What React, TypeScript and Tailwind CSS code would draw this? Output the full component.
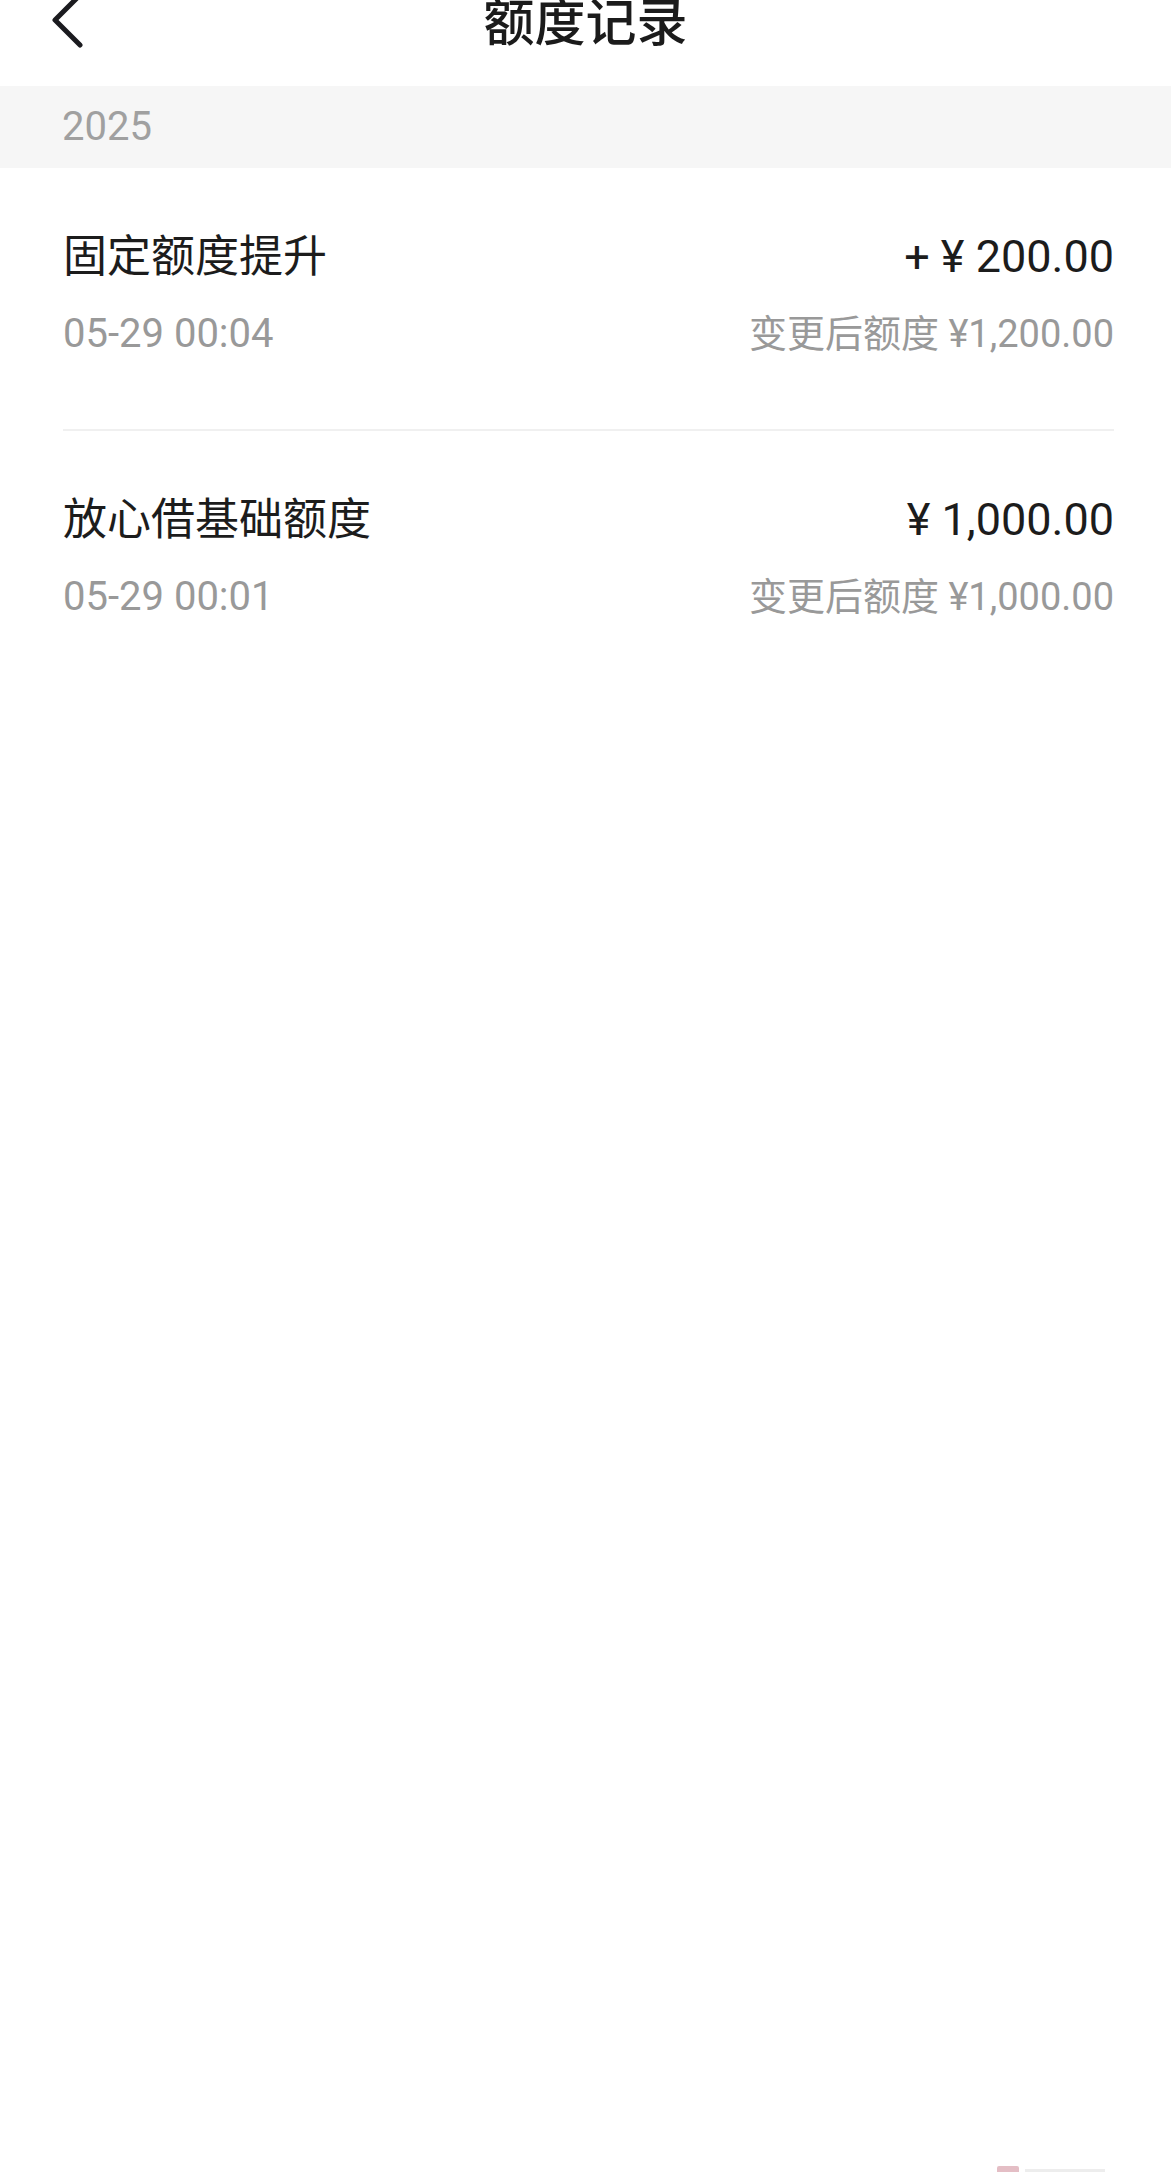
import React from "react";

const FONT = { fontFamily: "Roboto, 'Noto Sans CJK SC', sans-serif" };

type Rec = { title: string; amount: string; date: string; after: string };

const records: Rec[] = [
  { title: "固定额度提升", amount: "+ ¥ 200.00", date: "05-29 00:04", after: "变更后额度 ¥1,200.00" },
  { title: "放心借基础额度", amount: "¥ 1,000.00", date: "05-29 00:01", after: "变更后额度 ¥1,000.00" },
];

export default function App() {
  return (
    <div className="relative min-h-[2172px] w-full overflow-hidden bg-white" style={FONT}>
      {/* Header */}
      <div className="grid h-[86px] grid-cols-[1fr_auto_1fr] items-start">
        <div className="pl-[45px]">
          <svg width="44" height="64" viewBox="0 0 44 64" className="-mt-[10px]" fill="none">
            <path d="M35 5 L10 30 L35 55" stroke="#1b1b1f" strokeWidth="5" strokeLinecap="round" strokeLinejoin="round" />
          </svg>
        </div>
        <div className="-mt-[4px] text-[51px] leading-[56px] font-medium text-[#1b1b1b]">额度记录</div>
        <div />
      </div>

      {/* Year band */}
      <div className="flex h-[82px] items-center bg-[#f6f6f6] pl-[62px] text-[40px] leading-[50px] text-[#a0a0a0]">
        2025
      </div>

      {/* Records */}
      <div className="pl-[63px] pr-[57px]">
        {records.map((r, i) => (
          <div
            key={i}
            className={
              i < records.length - 1
                ? "border-b-2 border-[#f0f0f0] pt-[59px] pb-[68px]"
                : "pt-[59px] pb-[68px]"
            }
          >
            <div className="flex items-center justify-between text-[44px] leading-[60px] text-[#1c1c1c]">
              <span>{r.title}</span>
              <span className="text-[45px]">{r.amount}</span>
            </div>
            <div className="mt-[20px] flex items-center justify-between text-[40px] leading-[54px] text-[#999999]">
              <span>{r.date}</span>
              <span className="text-[38px]">{r.after}</span>
            </div>
          </div>
        ))}
      </div>

      {/* faint watermark at bottom edge */}
      <div className="absolute bottom-0 right-[66px] flex h-[7px] items-end gap-[6px] opacity-70">
        <div className="h-[6px] w-[22px] rounded-t-[2px] bg-[#d9a3ad]" />
        <div className="h-[3px] w-[80px] bg-[#e6e6e6]" />
      </div>
    </div>
  );
}
